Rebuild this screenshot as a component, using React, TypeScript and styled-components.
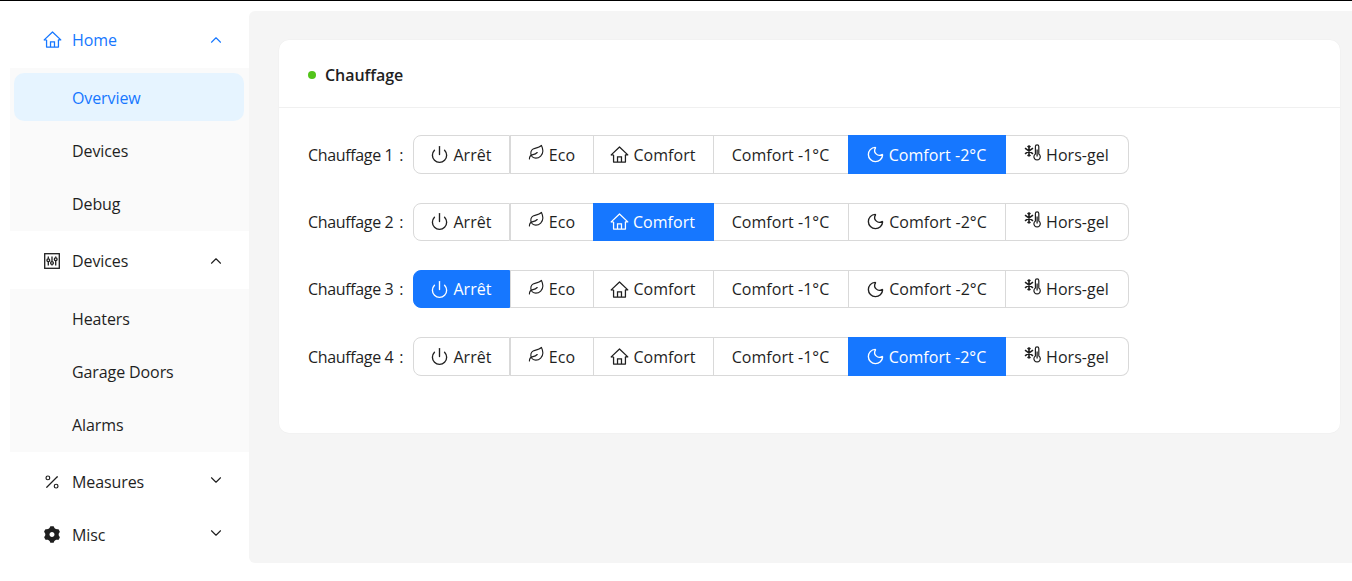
import type { ReactNode } from "react";
import { createGlobalStyle, styled } from "styled-components";
import { ChevronDown, ChevronUp, Leaf, Moon, Percent, Power } from "lucide-react";
import { RiSettings3Fill } from "react-icons/ri";

const GlobalStyle = createGlobalStyle`
  html, body {
    margin: 0;
    padding: 0;
    background: #fff;
  }
  body {
    font-family: "Open Sans", "Noto Sans", sans-serif;
    font-size: 16px;
    color: #1f1f1f;
  }
`;

const HomeIcon = ({ size = 19 }: { size?: number }) => (
  <svg width={size} height={size} viewBox="0 0 24 24" fill="none" stroke="currentColor" strokeWidth="1.6">
    <path d="M1.5 12.5 12 2.5l10.5 10h-3" strokeLinejoin="round" strokeLinecap="round" />
    <path d="M1.5 12.5h3M4.5 12.5v9h15v-9" strokeLinejoin="round" />
    <path d="M9.5 21.5v-6.5h5v6.5" />
  </svg>
);

const SlidersIcon = () => (
  <svg width="18" height="18" viewBox="0 0 18 18" fill="none" stroke="currentColor" strokeWidth="1.3">
    <rect x="1.7" y="1.7" width="14.6" height="14.6" />
    <path d="M5.3 4.5v2.2M5.3 10v3.5M9 4.5v5M9 12.5v1M12.7 4.5v1.2M12.7 9v4.5" />
    <circle cx="5.3" cy="8.3" r="1.4" />
    <circle cx="9" cy="11" r="1.4" />
    <circle cx="12.7" cy="7.3" r="1.4" />
  </svg>
);

const FrostIcon = () => (
  <svg width="18" height="18" viewBox="0 0 18 18" fill="none" stroke="currentColor">
    <path d="M11.4 10V2.6a1.7 1.7 0 0 1 3.4 0V10a3.2 3.2 0 1 1-3.4 0Z" strokeWidth="1.2" />
    <path d="M13.1 5.5v7" strokeWidth="1.3" />
    <path d="M5 1.5v11M1 4.2l8 5.6M9 4.2 1 9.8M3.6 2l1.4 1.4L6.4 2M3.6 12l1.4-1.4L6.4 12" strokeWidth="1.6" />
  </svg>
);

const Raised = ({ children }: { children: ReactNode }) => <RaisedIcon>{children}</RaisedIcon>;

const modes = [
  { label: "Arrêt", width: 97, icon: <Power size={19} strokeWidth={1.7} /> },
  { label: "Eco", width: 84, icon: <Raised><Leaf size={17} strokeWidth={1.6} /></Raised> },
  { label: "Comfort", width: 120, icon: <HomeIcon /> },
  { label: "Comfort -1°C", width: 135 },
  { label: "Comfort -2°C", width: 157, icon: <Moon size={19} strokeWidth={1.7} /> },
  { label: "Hors-gel", width: 123, icon: <Raised><FrostIcon /></Raised> },
];

const heaters = [
  { name: "Chauffage 1", active: 4 },
  { name: "Chauffage 2", active: 2 },
  { name: "Chauffage 3", active: 0 },
  { name: "Chauffage 4", active: 4 },
];

const App = () => {
  return (
    <>
      <GlobalStyle />
      <TopLine />
      <Layout>
        <Sidebar>
          <MenuHeader $selected>
            <MenuIcon><HomeIcon /></MenuIcon>
            Home
            <Arrow><ChevronUp size={18} strokeWidth={1.5} /></Arrow>
          </MenuHeader>
          <SubMenu>
            <SubItem $selected>Overview</SubItem>
            <SubItem>Devices</SubItem>
            <SubItem>Debug</SubItem>
          </SubMenu>
          <MenuHeader>
            <MenuIcon><SlidersIcon /></MenuIcon>
            Devices
            <Arrow><ChevronUp size={18} strokeWidth={1.5} /></Arrow>
          </MenuHeader>
          <SubMenu>
            <SubItem>Heaters</SubItem>
            <SubItem>Garage Doors</SubItem>
            <SubItem>Alarms</SubItem>
          </SubMenu>
          <MenuHeader>
            <MenuIcon><Percent size={18} strokeWidth={1.6} /></MenuIcon>
            Measures
            <Arrow $down><ChevronDown size={18} strokeWidth={1.5} /></Arrow>
          </MenuHeader>
          <MenuHeader>
            <MenuIcon><RiSettings3Fill size={21} /></MenuIcon>
            Misc
            <Arrow $down><ChevronDown size={18} strokeWidth={1.5} /></Arrow>
          </MenuHeader>
        </Sidebar>
        <Main>
          <Card>
            <CardHeader>
              <StatusDot />
              <CardTitle>Chauffage</CardTitle>
            </CardHeader>
            <CardBody>
              {heaters.map((heater) => (
                <HeaterRow key={heater.name}>
                  <HeaterLabel>
                    {heater.name}
                    <span>:</span>
                  </HeaterLabel>
                  <Segments>
                    {modes.map((mode, index) => (
                      <Segment
                        key={mode.label}
                        $width={mode.width}
                        $active={index === heater.active}
                        $index={index}
                      >
                        {mode.icon}
                        {mode.label}
                      </Segment>
                    ))}
                  </Segments>
                </HeaterRow>
              ))}
            </CardBody>
          </Card>
        </Main>
      </Layout>
    </>
  );
};

export default App;

const RaisedIcon = styled.span`
  display: flex;
  transform: translateY(-2px);
`;

const TopLine = styled.div`
  height: 1px;
  background-color: #000;
`;

const Layout = styled.div`
  display: flex;
  align-items: flex-start;
`;

const Sidebar = styled.nav`
  display: flex;
  flex-direction: column;
  flex-shrink: 0;

  width: 239px;
  padding: 14.5px 0 0 10px;
`;

const MenuHeader = styled.div<{ $selected?: boolean }>`
  display: flex;
  align-items: center;

  height: 47.4px;
  margin-bottom: 5px;
  padding: 0.6px 0 0 32px;

  color: ${({ $selected }) => ($selected ? "#1677ff" : "#1f1f1f")};
  letter-spacing: -0.1px;
`;

const MenuIcon = styled.span`
  display: flex;
  justify-content: center;
  align-items: center;

  width: 20px;
  height: 20px;
  margin-right: 10px;
`;

const Arrow = styled.span<{ $down?: boolean }>`
  display: flex;
  margin-left: auto;
  margin-right: 24px;
  transform: translateY(${({ $down }) => ($down ? "-2px" : "0")});
`;

const SubMenu = styled.div`
  display: flex;
  flex-direction: column;
  gap: 5px;

  margin-bottom: 5px;
  padding: 4.8px 5px 4.2px 4px;

  background-color: #fafafa;
`;

const SubItem = styled.div<{ $selected?: boolean }>`
  display: flex;
  align-items: center;

  height: 46.4px;
  padding: 1.6px 0 0 58px;

  border-radius: 10px;
  background-color: ${({ $selected }) => ($selected ? "#e6f4ff" : "transparent")};
  color: ${({ $selected }) => ($selected ? "#1677ff" : "#1f1f1f")};
  letter-spacing: -0.1px;
`;

const Main = styled.main`
  flex: 1;
  height: 523px;
  margin-top: 10px;
  padding: 29px 12px 0 30px;

  border-radius: 6px 0 0 6px;
  background-color: #f5f5f5;
`;

const Card = styled.section`
  height: 393px;

  border-radius: 10px;
  background-color: #fff;
  box-shadow: 0 0 0 0.5px #efefef;
`;

const CardHeader = styled.div`
  display: flex;
  align-items: center;
  gap: 9px;

  height: 65px;
  padding: 2px 0 0 29px;

  border-bottom: 1px solid #f0f0f0;
`;

const StatusDot = styled.span`
  width: 8px;
  height: 8px;
  border-radius: 50%;
  background-color: #52c41a;
`;

const CardTitle = styled.span`
  font-weight: 600;
  letter-spacing: -0.05px;
`;

const CardBody = styled.div`
  display: flex;
  flex-direction: column;
  gap: 28.93px;

  padding: 27.4px 29px 0;
`;

const HeaterRow = styled.div`
  display: flex;
  align-items: center;
`;

const HeaterLabel = styled.label`
  display: flex;
  justify-content: space-between;

  width: 95px;
  margin-right: 10px;
  letter-spacing: -0.35px;
`;

const Segments = styled.div`
  display: flex;
`;

const Segment = styled.button<{ $width: number; $active: boolean; $index: number }>`
  display: flex;
  justify-content: center;
  align-items: center;
  gap: 4px;

  width: ${({ $width, $active, $index }) => ($active && $index > 1 ? $width + 1 : $width)}px;
  height: 38.4px;
  margin-left: ${({ $active, $index }) => ($active && $index > 1 ? "-1px" : "0")};
  padding: 0 1px 0 0;
  box-sizing: border-box;

  border: 1px solid ${({ $active }) => ($active ? "#1677ff" : "#d9d9d9")};
  border-left-width: ${({ $index }) => ($index < 2 ? "1px" : "0")};
  border-radius: ${({ $index }) =>
    $index === 0 ? "8px 0 0 8px" : $index === 5 ? "0 8px 8px 0" : "0"};
  background-color: ${({ $active }) => ($active ? "#1677ff" : "#fff")};
  color: ${({ $active }) => ($active ? "#fff" : "#1f1f1f")};

  font-family: inherit;
  font-size: 16px;
  letter-spacing: 0.05px;
`;
